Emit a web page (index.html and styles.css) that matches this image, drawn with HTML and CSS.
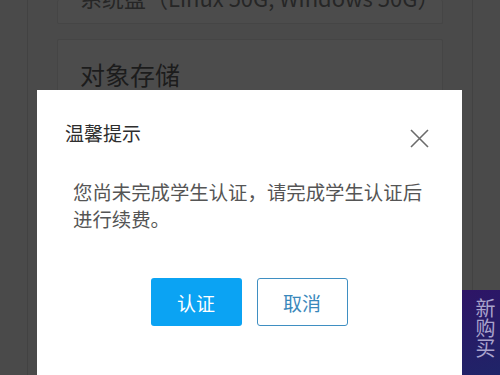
FILE: index.html
```html
<!DOCTYPE html>
<html lang="zh">
<head>
    <meta charset="UTF-8">
    <meta name="viewport" content="width=device-width, initial-scale=1.0">
    <title>温馨提示</title>
    <link rel="stylesheet" href="styles.css">
</head>
<body>
    <div class="page">
        <div class="card card-top">
            <p class="disk">系统盘（Linux 50G, Windows 50G）</p>
        </div>
        <div class="card">
            <h3 class="card-title">对象存储</h3>
        </div>
    </div>

    <div class="promo">新购买</div>

    <div class="dialog">
        <div class="dialog-head">
            <h4>温馨提示</h4>
            <svg class="close" width="19" height="19" viewBox="0 0 19 19">
                <path d="M1 1 L18 18 M18 1 L1 18" stroke="#6b6b6b" stroke-width="1.6" fill="none"/>
            </svg>
        </div>
        <p class="dialog-body">您尚未完成学生认证，请完成学生认证后进行续费。</p>
        <div class="actions">
            <button class="btn btn-primary">认证</button>
            <button class="btn btn-plain">取消</button>
        </div>
    </div>
</body>
</html>
```

FILE: styles.css
```css
body {
    margin: 0;
    background-color: #4a4a4a;
    font-family: "Noto Sans CJK SC", "Noto Sans", sans-serif;
    height: 375px;
    overflow: hidden;
    position: relative;
}
.page {
    margin: 0 27px;
    border-left: 1px solid #424242;
    border-right: 1px solid #424242;
    padding: 0 29px;
    height: 375px;
}
.card {
    background: #4c4c4c;
    border: 1px solid #454545;
    border-radius: 2px;
    padding: 0 22px;
    height: 200px;
}
.card-top {
    height: 23px;
    border-top: none;
    margin-bottom: 15px;
    overflow: hidden;
    position: relative;
}
.disk {
    margin: 0;
    position: relative;
    top: -19px;
    font-size: 22px;
    color: #262626;
    white-space: nowrap;
}
.card-title {
    margin: 16px 0 0;
    font-size: 25px;
    font-weight: normal;
    color: #1c1c1c;
}
.promo {
    position: absolute;
    left: 455px;
    top: 290px;
    width: 45px;
    height: 85px;
    box-sizing: border-box;
    padding: 8px 0 0 8px;
    background: linear-gradient(160deg, #2e1466, #1f2468);
    color: #a9a3cc;
    font-size: 20px;
    line-height: 30px;
    writing-mode: vertical-rl;
}
.dialog {
    position: absolute;
    left: 37px;
    top: 90px;
    width: 425px;
    height: 300px;
    background: #ffffff;
    box-sizing: border-box;
    padding: 27px 33px 0 28px;
}
.dialog-head {
    display: flex;
    justify-content: space-between;
    align-items: center;
}
.dialog-head h4 {
    margin: 0;
    font-size: 19px;
    font-weight: normal;
    line-height: 26px;
    color: #2e2e2e;
}
.close {
    margin-top: 12px;
}
.dialog-body {
    margin: 30px 0 0 8px;
    font-size: 19.4px;
    line-height: 27px;
    color: #555555;
}
.actions {
    display: flex;
    justify-content: center;
    gap: 15px;
    margin-top: 46px;
    padding-left: 4px;
}
.btn {
    width: 91px;
    height: 48px;
    font-family: inherit;
    font-size: 19px;
    border-radius: 3px;
    cursor: pointer;
}
.btn-primary {
    background: #0ba3f3;
    border: none;
    color: #ffffff;
}
.btn-plain {
    background: #ffffff;
    border: 1.5px solid #3f8fc2;
    color: #3a88bb;
}
```
